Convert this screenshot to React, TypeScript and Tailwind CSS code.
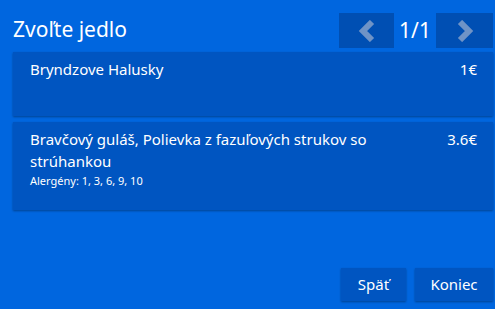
import React from "react";

const Chevron = ({ dir }: { dir: "left" | "right" }) => (
  <svg width="18" height="22" viewBox="0 0 18 22">
    <path
      d={dir === "left" ? "M14 2 L5 11 L14 20" : "M4 2 L13 11 L4 20"}
      fill="none"
      stroke="#6f93c6"
      strokeWidth="6"
      strokeLinejoin="miter"
    />
  </svg>
);

export default function App() {
  return (
    <div
      className="w-[495px] h-[309px] bg-[#0066df] text-white flex flex-col pl-[13px] pr-[2px] overflow-hidden"
      style={{ fontFamily: '"Segoe UI", "Noto Sans", sans-serif' }}
    >
      <div className="flex items-center h-[35px] mt-[13px] mb-[4px]">
        <div className="flex-1 text-[21px] leading-none pb-[2px]">Zvoľte jedlo</div>
        <div className="flex items-center">
          <button className="w-[55px] h-[35px] bg-[#004fb3] flex items-center justify-center">
            <Chevron dir="left" />
          </button>
          <div className="w-[42px] text-center text-[21px] leading-none pb-[1px]">1/1</div>
          <button className="w-[57px] h-[35px] bg-[#004fb3] flex items-center justify-center">
            <Chevron dir="right" />
          </button>
        </div>
      </div>
      <div className="flex flex-col gap-[6px]">
        <div className="h-[64px] bg-[#0055c1] shadow-[0_1px_2px_rgba(0,0,0,0.35)] flex justify-between pl-[17px] pr-[16px] pt-[6px]">
          <div className="text-[15px] leading-[22px]">Bryndzove Halusky</div>
          <div className="text-[15px] leading-[22px]">1€</div>
        </div>
        <div className="h-[88px] bg-[#0055c1] shadow-[0_1px_2px_rgba(0,0,0,0.35)] flex justify-between pl-[17px] pr-[16px] pt-[6px]">
          <div className="flex flex-col w-[400px]">
            <div className="text-[15px] leading-[22px]">
              Bravčový guláš, Polievka z fazuľových strukov so strúhankou
            </div>
            <div className="text-[11px] leading-[16px] mt-[1px]">Alergény: 1, 3, 6, 9, 10</div>
          </div>
          <div className="text-[15px] leading-[22px]">3.6€</div>
        </div>
      </div>
      <div className="flex-1" />
      <div className="flex justify-end gap-[9px] pb-[8px]">
        <button className="w-[65px] h-[33px] bg-[#0055c1] shadow-[0_1px_2px_rgba(0,0,0,0.35)] text-[15px] text-white">
          Späť
        </button>
        <button className="w-[78px] h-[33px] bg-[#0055c1] shadow-[0_1px_2px_rgba(0,0,0,0.35)] text-[15px] text-white">
          Koniec
        </button>
      </div>
    </div>
  );
}
